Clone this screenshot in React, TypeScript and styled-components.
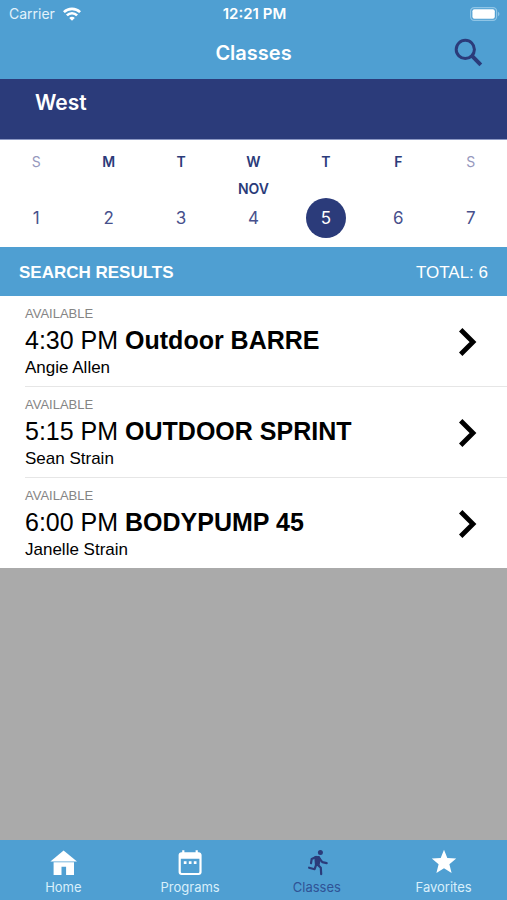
import React, { useState } from "react";
import styled, { createGlobalStyle, ThemeProvider } from "styled-components";

const theme = {
  sky: "#4f9fd2",
  navy: "#2b3b7a",
  ui: '"Inter", sans-serif',
  body: '"Liberation Sans", Arial, sans-serif',
};

const GlobalStyle = createGlobalStyle`
  * { box-sizing: border-box; }
  body { margin: 0; }
  button { border: 0; padding: 0; margin: 0; background: none; font: inherit; color: inherit; cursor: pointer; }
  h1, h2, p { margin: 0; font-weight: inherit; font-size: inherit; }
  svg { display: block; }
`;

const Screen = styled.div`
  display: flex;
  flex-direction: column;
  min-height: 100vh;
  background: #aaaaaa;
  font-family: ${theme.body};
`;

const Header = styled.header`
  background: ${theme.sky};
  color: #fff;
  font-family: ${theme.ui};
`;

const Triple = styled.div`
  display: grid;
  grid-template-columns: 1fr auto 1fr;
  align-items: center;
`;

const StatusBar = styled(Triple)`
  height: 27px;
  padding: 0 7px 0 9px;
  font-size: 14px;
  line-height: 16px;
`;

const Carrier = styled.div`
  display: flex;
  align-items: center;
  gap: 8px;
  color: #e2f2fb;
`;

const Clock = styled.time`
  font-size: 15px;
  font-weight: 600;
`;

const Battery = styled.div`
  justify-self: end;
`;

const TitleBar = styled(Triple)`
  height: 52px;
  padding: 0 22px;
`;

const Title = styled.h1`
  grid-column: 2;
  font-size: 20px;
  line-height: 24px;
  font-weight: 600;
`;

const SearchButton = styled.button`
  justify-self: end;
  color: ${theme.navy};
`;

const Location = styled.h2`
  height: 61px;
  padding: 11px 35px;
  background: ${theme.navy};
  border-bottom: 1px solid #8c98c4;
  color: #fff;
  font-family: ${theme.ui};
  font-size: 21px;
  line-height: 26px;
  font-weight: 600;
`;

const Week = styled.div`
  display: grid;
  grid-template-columns: repeat(7, 1fr);
  height: 107px;
  padding-top: 12px;
  background: #fff;
  color: ${theme.navy};
  font-family: ${theme.ui};
`;

const Day = styled.button`
  display: grid;
  grid-template-rows: 20px 26px 40px;
  align-content: start;
  place-items: center;
`;

const Weekday = styled.span<{ $muted: boolean }>`
  font-size: 14px;
  line-height: 20px;
  font-weight: ${(p) => (p.$muted ? 400 : 600)};
  color: ${(p) => (p.$muted ? "#9698bd" : theme.navy)};
`;

const Month = styled.span`
  align-self: end;
  font-size: 14px;
  line-height: 18px;
  font-weight: 600;
`;

const DayNumber = styled.span<{ $selected: boolean }>`
  width: 40px;
  height: 40px;
  border-radius: 50%;
  font-size: 17px;
  line-height: 40px;
  text-align: center;
  background: ${(p) => (p.$selected ? theme.navy : "transparent")};
  color: ${(p) => (p.$selected ? "#fff" : "#47508c")};
`;

const ResultsBar = styled.div`
  display: flex;
  justify-content: space-between;
  align-items: center;
  height: 49px;
  padding: 2px 19px 0;
  background: ${theme.sky};
  color: #fff;
  font-size: 17px;
  line-height: 20px;
`;

const ResultsHeading = styled.h2`
  font-weight: 700;
`;

const ClassList = styled.ul`
  margin: 0;
  padding: 0 0 0 25px;
  list-style: none;
  background: #fff;
`;

const ClassItem = styled.li`
  & + & {
    border-top: 1px solid #e6e6e6;
  }
`;

const ClassRow = styled.button`
  display: flex;
  align-items: center;
  justify-content: space-between;
  width: 100%;
  min-height: 90px;
  padding: 2px 30px 0 0;
  text-align: left;
  color: #000;
`;

const Availability = styled.p`
  font-size: 13px;
  line-height: 16px;
  color: #858585;
`;

const ClassTitle = styled.p`
  font-size: 25px;
  line-height: 36px;
`;

const Instructor = styled.p`
  font-size: 17px;
  line-height: 20px;
`;

const TabBar = styled.nav`
  display: grid;
  grid-template-columns: repeat(4, 1fr);
  height: 60px;
  margin-top: auto;
  background: ${theme.sky};
  font-family: ${theme.ui};
`;

const Tab = styled.button<{ $active: boolean }>`
  display: flex;
  flex-direction: column;
  align-items: center;
  gap: 2px;
  padding-top: 8px;
  color: ${(p) => (p.$active ? theme.navy : "#fff")};
`;

const TabLabel = styled.span<{ $active: boolean }>`
  font-size: 13px;
  line-height: 18px;
  color: ${(p) => (p.$active ? "#2f5396" : "#d9effb")};
`;

const WifiIcon = () => (
  <svg width="18" height="14" viewBox="0 0 18 14" fill="none" stroke="#fff" strokeWidth="2.6" aria-hidden="true">
    <path d="M.9 5.2C5.3.8 12.7.8 17.1 5.2" />
    <path d="M3.9 8.4c2.8-2.9 7.4-2.9 10.2 0" />
    <path d="M9 13.8 6.2 10.9c1.5-1.6 4.1-1.6 5.6 0Z" fill="#fff" stroke="none" />
  </svg>
);

const BatteryIcon = () => (
  <svg width="30" height="14" viewBox="0 0 30 14" aria-label="Battery full" role="img">
    <rect x=".6" y=".6" width="26" height="12.8" rx="3.6" fill="none" stroke="#8fc5e6" strokeWidth="1.2" />
    <rect x="2.4" y="2.3" width="22.4" height="9.4" rx="2" fill="#fff" />
    <path d="M28 4.8c2 .8 2 3.6 0 4.4Z" fill="#8fc5e6" />
  </svg>
);

const SearchIcon = () => (
  <svg width="34" height="34" viewBox="0 0 34 34" fill="none" stroke="currentColor" aria-hidden="true">
    <circle cx="14.3" cy="13.4" r="9.1" strokeWidth="3" />
    <path d="M20.5 19.4 29.8 28.9" strokeWidth="3.9" />
  </svg>
);

const ChevronIcon = () => (
  <svg width="18" height="30" viewBox="0 0 18 30" fill="none" stroke="currentColor" strokeWidth="4.8" aria-hidden="true">
    <path d="M1.7 2.7 14 15 1.7 27.3" />
  </svg>
);

const HomeIcon = () => (
  <svg width="28" height="28" viewBox="0 0 28 28" fill="currentColor" aria-hidden="true">
    <path d="M14.6 2.4 28 13.4H1.4Z" />
    <path d="M4.6 14.2h20.4V27h-7.9v-8.2h-4.6V27H4.6Z" />
  </svg>
);

const CalendarIcon = () => (
  <svg width="28" height="28" viewBox="0 0 28 28" fill="currentColor" aria-hidden="true">
    <path
      fillRule="evenodd"
      d="M6.2 2.2h2.2v2h11.2v-2h2.2v2h.9c1.6 0 2.9 1.2 2.9 2.8v17.2c0 1.6-1.3 2.8-2.9 2.8H5.5c-1.6 0-2.9-1.2-2.9-2.8V7c0-1.6 1.3-2.8 2.9-2.8h.7ZM4.8 10.8v12.6c0 1 .5 1.5 1.5 1.5h15.6c1 0 1.5-.5 1.5-1.5V10.8Z"
    />
    <path d="M7.8 13.2h2.7v2.7H7.8ZM12.8 13.2h2.7v2.7h-2.7ZM17.8 13.2h2.7v2.7h-2.7Z" />
  </svg>
);

const RunnerIcon = () => (
  <svg
    width="28"
    height="28"
    viewBox="0 0 28 28"
    fill="none"
    stroke="currentColor"
    strokeWidth="2.2"
    strokeLinecap="round"
    strokeLinejoin="round"
    aria-hidden="true"
  >
    <circle cx="17.4" cy="4.5" r="2.5" fill="currentColor" stroke="none" />
    <path d="m12 9 4-.4 1.2 2.4-1.4 6.2-3.2-.4Z" fill="currentColor" strokeWidth="1.4" />
    <path d="M13 9 8.7 10.9 8 15.2" />
    <path d="m16.4 10.4 2.9 3.8 4.4.9" />
    <path d="m13.3 16.4-1.7 4.8-5.5-1.5" />
    <path d="m14.6 16.6 3.2 3.2.4 6.3" />
  </svg>
);

const StarIcon = () => (
  <svg width="28" height="28" viewBox="0 0 28 28" fill="currentColor" aria-hidden="true">
    <path d="m14 1.8 3.3 8.2 8.9.6-6.8 5.7 2.2 8.8L14 20.3l-7.6 4.8 2.2-8.8-6.8-5.7 8.9-.6Z" />
  </svg>
);

const days = [
  { letter: "S", number: 1 },
  { letter: "M", number: 2 },
  { letter: "T", number: 3 },
  { letter: "W", number: 4, month: "NOV" },
  { letter: "T", number: 5 },
  { letter: "F", number: 6 },
  { letter: "S", number: 7 },
];

const classes = [
  { time: "4:30 PM", name: "Outdoor BARRE", instructor: "Angie Allen" },
  { time: "5:15 PM", name: "OUTDOOR SPRINT", instructor: "Sean Strain" },
  { time: "6:00 PM", name: "BODYPUMP 45", instructor: "Janelle Strain" },
];

const tabs = [
  { label: "Home", Icon: HomeIcon },
  { label: "Programs", Icon: CalendarIcon },
  { label: "Classes", Icon: RunnerIcon },
  { label: "Favorites", Icon: StarIcon },
];

export default function App() {
  const [selectedDay, setSelectedDay] = useState(5);
  const [activeTab, setActiveTab] = useState("Classes");

  return (
    <ThemeProvider theme={theme}>
      <GlobalStyle />
      <Screen>
        <Header>
          <StatusBar>
            <Carrier>
              Carrier
              <WifiIcon />
            </Carrier>
            <Clock>12:21 PM</Clock>
            <Battery>
              <BatteryIcon />
            </Battery>
          </StatusBar>
          <TitleBar>
            <Title>Classes</Title>
            <SearchButton aria-label="Search">
              <SearchIcon />
            </SearchButton>
          </TitleBar>
        </Header>
        <main>
          <Location>West</Location>
          <Week>
            {days.map((d) => (
              <Day key={d.number} aria-pressed={d.number === selectedDay} onClick={() => setSelectedDay(d.number)}>
                <Weekday $muted={d.letter === "S"}>{d.letter}</Weekday>
                <Month>{d.month}</Month>
                <DayNumber $selected={d.number === selectedDay}>{d.number}</DayNumber>
              </Day>
            ))}
          </Week>
          <ResultsBar>
            <ResultsHeading>SEARCH RESULTS</ResultsHeading>
            <span>TOTAL: 6</span>
          </ResultsBar>
          <ClassList>
            {classes.map((c) => (
              <ClassItem key={c.name}>
                <ClassRow>
                  <div>
                    <Availability>AVAILABLE</Availability>
                    <ClassTitle>
                      {c.time} <strong>{c.name}</strong>
                    </ClassTitle>
                    <Instructor>{c.instructor}</Instructor>
                  </div>
                  <ChevronIcon />
                </ClassRow>
              </ClassItem>
            ))}
          </ClassList>
        </main>
        <TabBar>
          {tabs.map(({ label, Icon }) => (
            <Tab
              key={label}
              $active={label === activeTab}
              aria-current={label === activeTab ? "page" : undefined}
              onClick={() => setActiveTab(label)}
            >
              <Icon />
              <TabLabel $active={label === activeTab}>{label}</TabLabel>
            </Tab>
          ))}
        </TabBar>
      </Screen>
    </ThemeProvider>
  );
}
